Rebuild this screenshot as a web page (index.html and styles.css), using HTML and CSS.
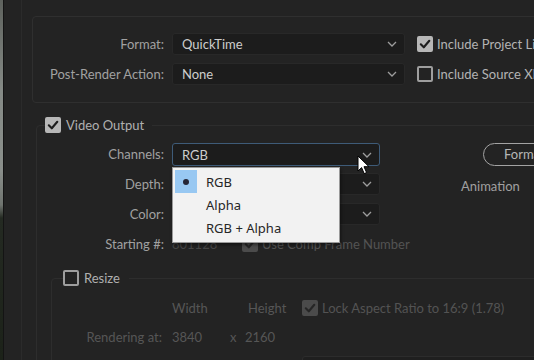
FILE: index.html
```html
<!DOCTYPE html>
<html lang="en">
<head>
<meta charset="utf-8">
<title>Output Module Settings</title>
<link rel="stylesheet" href="styles.css">
</head>
<body>
<div class="edge"></div>
<div class="edge-line"></div>
<div class="gutter"></div>
<main class="content">
  <section class="panel">
    <div class="top-grid">
      <span class="lbl">Format:</span>
      <div class="select"><span>QuickTime</span><svg class="chev" viewBox="0 0 10 6"><path d="M1 1 L5 5 L9 1"/></svg></div>
      <div class="check"><span class="box on"><svg viewBox="0 0 16 16"><path d="M3.8 8.3 L6.8 11.3 L12.3 4.8"/></svg></span><span>Include Project Link</span></div>
      <span class="lbl">Post-Render Action:</span>
      <div class="select"><span>None</span><svg class="chev" viewBox="0 0 10 6"><path d="M1 1 L5 5 L9 1"/></svg></div>
      <div class="check"><span class="box"></span><span>Include Source XMP Metadata</span></div>
    </div>
  </section>

  <fieldset class="group video">
    <legend class="legend"><span class="box on"><svg viewBox="0 0 16 16"><path d="M3.8 8.3 L6.8 11.3 L12.3 4.8"/></svg></span><span>Video Output</span></legend>
    <div class="vgrid">
      <span class="lbl">Channels:</span>
      <div class="select focus"><span>RGB</span><svg class="chev" viewBox="0 0 10 6"><path d="M1 1 L5 5 L9 1"/></svg></div>
      <div class="side"><button class="pill">Format Options...</button></div>

      <span class="lbl">Depth:</span>
      <div class="select"><span></span><svg class="chev" viewBox="0 0 10 6"><path d="M1 1 L5 5 L9 1"/></svg></div>
      <div class="side"><span class="anim">Animation</span></div>

      <span class="lbl">Color:</span>
      <div class="select"><span></span><svg class="chev" viewBox="0 0 10 6"><path d="M1 1 L5 5 L9 1"/></svg></div>
      <div class="side"></div>

      <span class="lbl">Starting #:</span>
      <div class="start"><span class="dimval">801128</span><div class="check dim"><span class="box on"><svg viewBox="0 0 16 16"><path d="M3.8 8.3 L6.8 11.3 L12.3 4.8"/></svg></span><span>Use Comp Frame Number</span></div></div>
      <div class="side"></div>
    </div>

    <fieldset class="group resize">
      <legend class="legend rlegend"><span class="box"></span><span>Resize</span></legend>
      <div class="rbody">
        <div class="rrow">
          <span class="rlabel"></span>
          <span class="rc1">Width</span>
          <span class="rc2">Height</span>
          <div class="check dim"><span class="box on"><svg viewBox="0 0 16 16"><path d="M3.8 8.3 L6.8 11.3 L12.3 4.8"/></svg></span><span>Lock Aspect Ratio to 16:9 (1.78)</span></div>
        </div>
        <div class="rrow">
          <span class="rlabel">Rendering at:</span>
          <span class="rv1">3840</span>
          <span class="rx">x</span>
          <span class="rv2">2160</span>
        </div>
        <div class="rbox"></div>
      </div>
    </fieldset>
  </fieldset>
</main>

<div class="menu">
  <div class="item sel"><span class="ico"><span class="dot"></span></span><span>RGB</span></div>
  <div class="item"><span class="ico"></span><span>Alpha</span></div>
  <div class="item"><span class="ico"></span><span>RGB + Alpha</span></div>
</div>

<svg class="cursor" viewBox="0 0 13 20" width="13" height="20"><path d="M1 1 L1 16 L4.6 12.6 L7.2 18.6 L9.6 17.6 L7 11.7 L12 11.7 Z"/></svg>
</body>
</html>
```
FILE: styles.css
```css
* { box-sizing: border-box; }
html, body { margin: 0; padding: 0; }
body {
  width: 534px;
  height: 360px;
  overflow: hidden;
  position: relative;
  display: flex;
  background: #232323;
  font-family: Lato, "Liberation Sans", sans-serif;
  font-size: 13px;
  color: #a3a3a3;
}
.edge {
  flex: none;
  width: 3px;
  background: linear-gradient(180deg, #5e625d 0px, #858a86 90px, #8a8f8b 170px, #6f746f 205px, #242a22 218px, #1c2219 360px);
}
.edge-line { flex: none; width: 1px; background: #141414; }
.gutter { flex: none; width: 18px; border-right: 1px solid #2b2b2b; }
.content { flex: none; width: 620px; padding-top: 16px; }

.panel {
  margin-left: 10px;
  border: 1px solid #2f2f2f;
  border-radius: 4px;
  padding: 16px 0 17px 0;
}
.top-grid {
  display: grid;
  grid-template-columns: 131px 233px auto;
  grid-auto-rows: 22px;
  column-gap: 8px;
  row-gap: 8px;
}
.lbl { text-align: right; line-height: 22px; white-space: nowrap; color: #a1a1a1; }
.select {
  height: 22px;
  display: flex;
  align-items: center;
  justify-content: space-between;
  padding: 0 7px 0 9px;
  background: #1c1c1c;
  border: 1px solid #282828;
  border-radius: 3px;
  color: #cdcdcd;
  white-space: nowrap;
  overflow: hidden;
}
.select.focus { border-color: #3e5b78; height: 23px; }
.chev { width: 10px; height: 6px; flex: none; }
.chev path { fill: none; stroke: #9d9d9d; stroke-width: 1.3; }

.check { display: flex; align-items: center; gap: 4px; white-space: nowrap; color: #b3b3b3; }
.top-grid .check { margin-left: 4px; }
.box {
  flex: none;
  width: 16px;
  height: 16px;
  border: 2px solid #9e9e9e;
  border-radius: 2px;
  display: flex;
  align-items: center;
  justify-content: center;
}
.box.on { background: #b7b7b7; border-color: #b7b7b7; }
.box svg { width: 16px; height: 16px; flex: none; }
.box svg path { fill: none; stroke: #1d1d1d; stroke-width: 2.1; stroke-linecap: round; stroke-linejoin: round; }
.check.dim { color: #535353; }
.check.dim .box.on { background: #4b4b4b; border-color: #4b4b4b; }
.check.dim .box svg path { stroke: #262626; }

.group {
  margin: 0;
  padding: 0;
  border: 1px solid #2d2d2d;
  border-radius: 4px;
  min-width: 0;
}
.video { margin: 13px 0 0 14px; }
.legend {
  margin-left: 8px;
  padding: 0 8px 0 0;
  height: 18px;
  display: flex;
  align-items: center;
  gap: 5px;
  color: #b0b0b0;
}
.vgrid {
  padding-top: 9px;
  display: grid;
  grid-template-columns: 127px 208px 1fr;
  grid-auto-rows: 22px;
  column-gap: 8px;
  row-gap: 8px;
}
.side { padding-left: 73px; display: flex; align-items: center; }
.pill {
  margin-left: 22px;
  height: 23px;
  padding: 0 20px;
  border: 1.5px solid #a3a3a3;
  border-radius: 12px;
  background: transparent;
  color: #b6b6b6;
  font: inherit;
  white-space: nowrap;
}
.anim { color: #a0a0a0; margin-top: 3px; }
.start { display: flex; align-items: center; overflow: visible; }
.dimval { flex: none; width: 70px; color: #464646; }
.start .check { flex: none; }

.resize { margin: 14px 0 0 14px; }
.rlegend { margin-left: 11px; padding-right: 9px; }
.rbody { padding-top: 12px; }
.rrow { display: flex; align-items: center; height: 18px; margin-bottom: 11px; color: #565656; white-space: nowrap; }
.rlabel { flex: none; width: 110px; margin-right: 10px; text-align: right; }
.rc1 { flex: none; width: 76px; }
.rc2 { flex: none; width: 54px; }
.rv1 { flex: none; width: 58px; }
.rx { flex: none; width: 15px; }
.rbox {
  margin-left: 250px;
  margin-top: -1px;
  height: 24px;
  border: 1px solid #2c2c2c;
  border-radius: 3px;
  background: #1f1f1f;
}

.menu {
  position: absolute;
  left: 172px;
  top: 167px;
  width: 168px;
  height: 76px;
  padding: 2px;
  background: #f2f2f2;
  border: 1px solid #9a9a9a;
  box-shadow: 1px 2px 3px rgba(0,0,0,0.45);
  font-family: "Noto Sans", "Open Sans", sans-serif;
  font-size: 13px;
  color: #262626;
}
.item { height: 23px; display: flex; align-items: center; }
.ico { width: 22px; height: 23px; margin-right: 9px; display: flex; align-items: center; justify-content: center; }
.item.sel .ico { background: #98c8f2; }
.dot { width: 6px; height: 6px; border-radius: 50%; background: #262636; }

.cursor { position: absolute; left: 357px; top: 155px; }
.cursor path { fill: #ffffff; stroke: #000000; stroke-width: 1; stroke-linejoin: round; }
```
